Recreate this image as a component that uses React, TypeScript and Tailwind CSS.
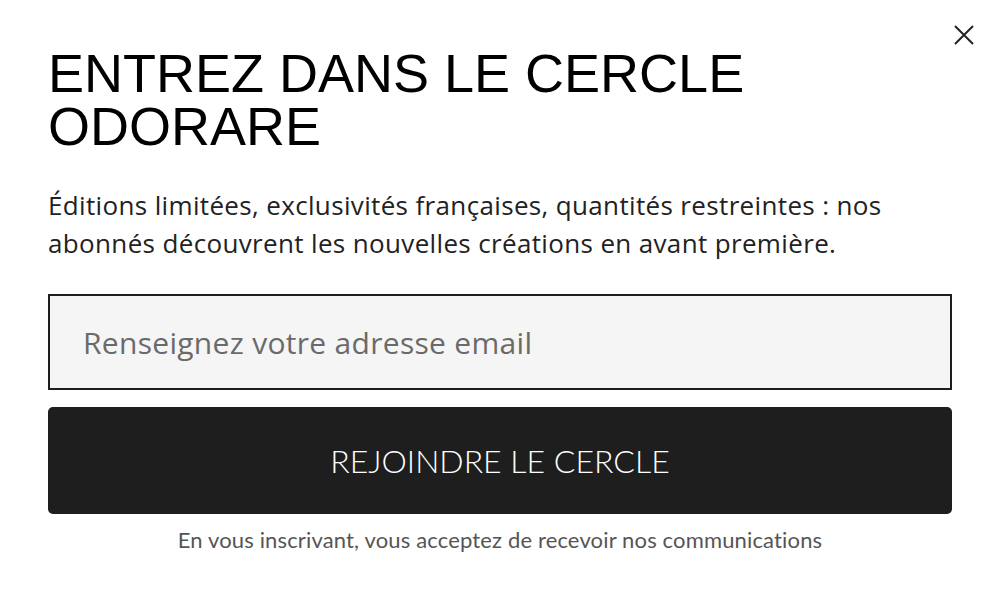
import React from 'react';

const App = () => {
  return (
    <div className="relative w-[1000px] h-[604px] bg-white overflow-hidden">
      <button className="absolute top-[24px] right-[25px] w-[22px] h-[22px] flex items-center justify-center text-[#222]">
        <svg width="22" height="22" viewBox="0 0 22 22" fill="none" stroke="currentColor" strokeWidth="2">
          <path d="M2 2 L20 20 M20 2 L2 20" />
        </svg>
      </button>
      <div className="px-[48px] pt-[47px] flex flex-col">
        <h1 className="text-[54px] leading-[53px] text-black font-['Liberation_Sans',Arial,sans-serif] max-w-[740px]">
          ENTREZ DANS LE CERCLE ODORARE
        </h1>
        <p className="mt-[33px] text-[26px] leading-[38px] tracking-[0.35px] text-[#222] font-['Open_Sans',sans-serif] max-w-[880px]">
          Éditions limitées, exclusivités françaises, quantités restreintes : nos abonnés découvrent les nouvelles créations en avant première.
        </p>
        <input
          type="email"
          placeholder="Renseignez votre adresse email"
          className="mt-[32px] h-[96px] w-full border-2 border-[#1e1e1e] bg-[#f5f5f5] px-[33px] text-[30px] tracking-[0.3px] font-['Open_Sans',sans-serif] placeholder:text-[#6a6a6a] outline-none"
        />
        <button className="mt-[17px] h-[107px] w-full rounded-[5px] bg-[#1e1e1e] text-white text-[32px] font-['Lato',sans-serif] font-light">
          REJOINDRE LE CERCLE
        </button>
        <p className="mt-[9px] text-center text-[22px] tracking-[0.15px] text-[#555] font-['Lato',sans-serif]">
          En vous inscrivant, vous acceptez de recevoir nos communications
        </p>
      </div>
    </div>
  );
};

export default App;
